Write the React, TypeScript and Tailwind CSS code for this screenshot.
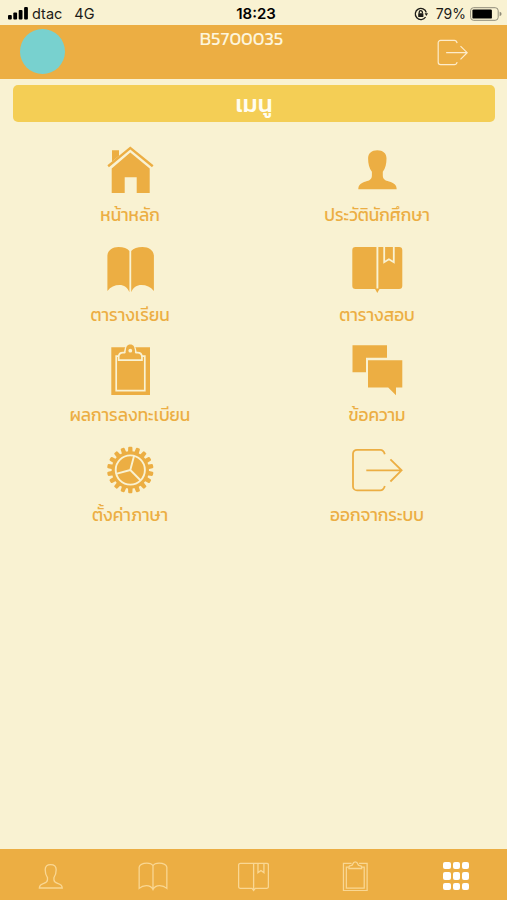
const CREAM = "#f9f2d2";

type IconProps = { className?: string };

function HomeIcon({ className }: IconProps) {
  return (
    <svg viewBox="0 0 52 52" className={className} fill="currentColor">
      <path d="M8 6.300h7v5.400L8 17.400z" />
      <path d="M26.300 2.400L49.500 21.300l-1.500 1.900L26.300 5.600 4.900 23.200l-1.500-1.900z" />
      <path d="M26.300 8.600L45.700 24.600V49h-13V33.300h-12V49h-13V24.600z" />
    </svg>
  );
}

const personPath =
  "M26.300 6.200c5.600 0 9.200 3 9.200 8.400 0 5-1 9.800-3.700 13.200v3.800c0 4 2.500 4.900 6.200 6 5 1.500 7.600 3.200 7.700 7.700H7.300c.1-4.500 2.600-6.200 7.500-7.700 3.700-1.100 6.100-2 6.100-6v-3.800c-2.700-3.400-3.800-8.200-3.800-13.200 0-5.400 3.600-8.400 9.200-8.400z";

function PersonIcon({ className }: IconProps) {
  return (
    <svg viewBox="0 0 52 52" className={className} fill="currentColor">
      <path d={personPath} />
    </svg>
  );
}

function BookIcon({ className }: IconProps) {
  return (
    <svg viewBox="0 0 52 52" className={className} fill="currentColor">
      <path d="M3.400 11.500C4 6 8.500 3 14.500 3c5 0 9 1.200 10.900 4v41.300c-2-5-5.400-7.300-9.800-7.300-5 0-9 2-12.200 5.900z" />
      <path d="M49.900 11.500C49.300 6 44.800 3 38.500 3c-5 0-9 1.200-11.300 4v41.300c2-5 5.600-7.300 10.200-7.300 5 0 9.200 2 12.500 5.900z" />
    </svg>
  );
}

function NotebookIcon({ className }: IconProps) {
  return (
    <svg viewBox="0 0 52 52" className={className} fill="currentColor">
      <path d="M4.500 3h43.600a3.200 3.200 0 0 1 3.200 3.200v35.600a3.200 3.200 0 0 1-3.200 3.200H28.500L26.300 49l-2.200-4H4.500a3.200 3.200 0 0 1-3.200-3.200V6.200A3.200 3.200 0 0 1 4.500 3z" />
      <path d="M26.400 2.500v42" stroke={CREAM} strokeWidth="1.900" />
      <path d="M33.200 2.500v15.700l4.700-2.900 4.900 2.900V2.500" stroke={CREAM} strokeWidth="1.800" fill="none" />
    </svg>
  );
}

const clipPath =
  "M15.500 15.300v-2.200c0-2.400 1.300-3.600 3.500-3.600h1.700c.8 0 1-.8 1.100-2C22.100 3.900 23.600 2 26.300 2s4.200 1.900 4.500 5.500c.1 1.200.3 2 1.100 2h1.700c2.200 0 3.500 1.200 3.500 3.600v2.200z";

function ClipboardIcon({ className }: IconProps) {
  return (
    <svg viewBox="0 0 52 52" className={className} fill="currentColor">
      <path d="M7.300 3.200H46V51H7.300z" />
      <path d="M12.200 12.200h28.600V46.700H12.200z" fill="none" stroke={CREAM} strokeWidth="1.700" />
      <path d={clipPath} stroke={CREAM} strokeWidth="3.400" />
      <path d="M21.800 8c0-5 1.200-7.400 4.500-7.400s4.500 2.400 4.500 7.400z" />
      <path d={clipPath} />
      <circle cx="26.300" cy="6.700" r="1.900" fill={CREAM} />
    </svg>
  );
}

function ChatIcon({ className }: IconProps) {
  return (
    <svg viewBox="0 0 52 52" className={className} fill="currentColor">
      <path d="M1.500 1.200H36v12.600H15v14.400H1.500z" />
      <path d="M17 16.200h34.300v27.200H45v7.900l-7.800-7.900H17z" />
    </svg>
  );
}

const teeth = Array.from({ length: 18 }, (_, i) => i * 20);

function GearIcon({ className }: IconProps) {
  return (
    <svg viewBox="0 0 52 52" className={className} fill="currentColor">
      <circle cx="26.300" cy="26" r="18.700" />
      {teeth.map((angle) => (
        <path key={angle} d="M24 8.500l.2-4.700q.1-1 1-1h2.200q.9 0 1 1l.2 4.700z" transform={`rotate(${angle} 26.300 26)`} />
      ))}
      <g fill="none" stroke={CREAM} strokeWidth="1.900">
        <circle cx="26.300" cy="26" r="14.600" />
        <path d="M26.300 26l3.800-14.300M26.300 26l10.400 10.500M26.300 26L12 29.800" />
      </g>
    </svg>
  );
}

function LogoutIcon({ className }: IconProps) {
  return (
    <svg viewBox="0 0 52 52" className={className} fill="none" stroke="currentColor">
      <path d="M33.800 10.200c-.8-2.900-2-4.400-4.600-4.400H6a4 4 0 0 0-4 4v32.600a4 4 0 0 0 4 4h23.200c2.600 0 3.800-1.500 4.600-4.400" />
      <path d="M15.300 26.300h35M39.400 15.300l11.200 11-11.200 11.200" />
    </svg>
  );
}

function PersonOutline({ className }: IconProps) {
  return (
    <svg viewBox="0 0 52 52" className={className} fill="none" stroke="currentColor" strokeWidth="2.200">
      <path d={personPath} />
    </svg>
  );
}

function BookOutline({ className }: IconProps) {
  return (
    <svg viewBox="0 0 52 52" className={className} fill="none" stroke="currentColor" strokeWidth="2.200">
      <path d="M26 8c-2-3.300-5.500-4.500-10.500-4.500C8.500 3.500 3 6.500 2 10.500v37c3.500-3.300 7.500-5 12.500-5 5.500 0 9.500 2.500 11.500 7 2-4.500 6-7 11.500-7 5 0 9 1.700 12.500 5v-37c-1-4-6.500-7-13.500-7C31.500 3.500 28 4.700 26 8zM26 8v41" />
    </svg>
  );
}

function NotebookOutline({ className }: IconProps) {
  return (
    <svg viewBox="0 0 52 52" className={className} fill="none" stroke="currentColor" strokeWidth="2.200">
      <path d="M4 4h44.500a2.500 2.500 0 0 1 2.500 2.500V43a3 3 0 0 1-3 3H29l-2.800 3.500L23.500 46H4a3 3 0 0 1-3-3V7a3 3 0 0 1 3-3zM26.200 4v44" />
      <path d="M33.500 4v15.500l5-3.500 5 3.500V4" />
    </svg>
  );
}

function ClipboardOutline({ className }: IconProps) {
  return (
    <svg viewBox="0 0 52 52" className={className} fill="none" stroke="currentColor" strokeWidth="2.200">
      <path d="M20 4H6v47.500h41V4H33" />
      <path d="M15 10.500h-4V47h31V10.500h-4" />
      <path d="M15.500 13v-2c0-2 1.200-3 3.500-3 2 0 2.800-1 3.200-2.800C22.700 3 24 1.500 26.500 1.500S30.300 3 30.800 5.200C31.200 7 32 8 34 8c2.300 0 3.500 1 3.500 3v2z" />
    </svg>
  );
}

function GridIcon() {
  return (
    <div className="grid grid-cols-3 gap-x-[2px] gap-y-[3px]">
      {Array.from({ length: 9 }, (_, i) => (
        <span key={i} className="h-[7.500px] w-[7.300px] rounded-[2px] bg-white" />
      ))}
    </div>
  );
}

const menuItems = [
  { icon: HomeIcon, label: "หน้าหลัก" },
  { icon: PersonIcon, label: "ประวัตินักศึกษา" },
  { icon: BookIcon, label: "ตารางเรียน" },
  { icon: NotebookIcon, label: "ตารางสอบ" },
  { icon: ClipboardIcon, label: "ผลการลงทะเบียน" },
  { icon: ChatIcon, label: "ข้อความ" },
  { icon: GearIcon, label: "ตั้งค่าภาษา" },
  { icon: LogoutIcon, label: "ออกจากระบบ" },
];

const tabs = [
  <PersonOutline className="size-[31px]" />,
  <BookOutline className="ml-px size-[30px]" />,
  <NotebookOutline className="ml-px size-[31px]" />,
  <ClipboardOutline className="size-[30px]" />,
  <GridIcon />,
];

function StatusBar() {
  return (
    <div className="flex h-[25px] shrink-0 items-center pt-[2px] pr-[5px] pl-2 font-['Inter',sans-serif] text-[14px] text-[#1c1b17]">
      <div className="flex flex-1 items-center">
        <svg viewBox="0 0 20 13" className="h-[13px] w-5" fill="#000">
          <rect x="0" y="8" width="3.800" height="4.500" rx="1" />
          <rect x="5.300" y="5.500" width="3.800" height="7" rx="1" />
          <rect x="10.700" y="3" width="3.800" height="9.500" rx="1" />
          <rect x="16.100" y="0" width="3.800" height="12.500" rx="1" />
        </svg>
        <span className="ml-1 text-[14.500px]">dtac</span>
        <span className="ml-3 text-[14.500px]">4G</span>
      </div>
      <span className="pt-px pl-0.5 text-[15px] font-semibold text-black">18:23</span>
      <div className="flex flex-1 items-center justify-end">
        <svg viewBox="0 0 14 14" className="mr-2 size-[14px]" fill="none" stroke="#1c1b17" strokeWidth="1.300">
          <path d="M12.300 5.500A5.600 5.600 0 1 0 11.600 10" />
          <path d="M10.600 6.300h3.400l-1.700 2.600z" fill="#1c1b17" stroke="none" />
          <rect x="4.200" y="6.300" width="5.200" height="3.800" rx=".5" fill="#1c1b17" stroke="none" />
          <path d="M5.200 6.500V5.300a1.600 1.600 0 0 1 3.200 0v1.200" />
        </svg>
        <span>79%</span>
        <svg viewBox="0 0 32 14" className="ml-1 h-[14px] w-8" fill="none">
          <rect x=".6" y=".7" width="27.600" height="12.600" rx="3" stroke="#8f8b79" strokeWidth="1" />
          <rect x="2.400" y="2.400" width="19.500" height="9.200" rx="1.200" fill="#000" />
          <path d="M29.600 4.800q2 .6 2 2.200t-2 2.200z" fill="#8f8b79" />
        </svg>
      </div>
    </div>
  );
}

export default function App() {
  return (
    <div className="flex h-[900px] w-[507px] flex-col overflow-hidden bg-[#f9f2d2] font-['Kanit','Prompt','Noto_Sans_Thai',sans-serif]">
      <StatusBar />

      {/* Header */}
      <header className="grid h-[54px] shrink-0 grid-cols-3 bg-[#ecae43] px-5">
        <div className="mt-1 size-[45px] rounded-full bg-[#78d1cf]" />
        <div className="pt-[2px] pr-[24px] text-center text-[18px] leading-6 text-[#fdf5dc]">B5700035</div>
        <div className="flex items-center justify-end pr-[19px] text-[#fdeccb]">
          <LogoutIcon className="size-[31px] stroke-2" />
        </div>
      </header>

      <main className="flex-1">
        <h1 className="mt-[6px] mr-[12px] ml-[13px] flex h-[37px] items-center justify-center rounded-[5px] bg-[#f4ce55] text-[24px] font-medium text-[#fffdf0]">
          เมนู
        </h1>

        {/* Menu */}
        <div className="mt-[22px] grid grid-cols-2 px-[6.500px]">
          {menuItems.map(({ icon: Icon, label }) => (
            <div key={label} className="flex h-[100px] flex-col items-center text-[#ecae43]">
              <Icon className="size-[52px] stroke-[1.800]" />
              <span className="mt-[7px] text-[17.200px] leading-6 whitespace-nowrap">{label}</span>
            </div>
          ))}
        </div>
      </main>

      {/* Tab bar */}
      <nav className="grid h-[51px] shrink-0 grid-cols-5 bg-[#ecae43] pt-[3px] text-[#f9d793]">
        {tabs.map((tab, i) => (
          <div key={i} className="flex items-center justify-center">
            {tab}
          </div>
        ))}
      </nav>
    </div>
  );
}
